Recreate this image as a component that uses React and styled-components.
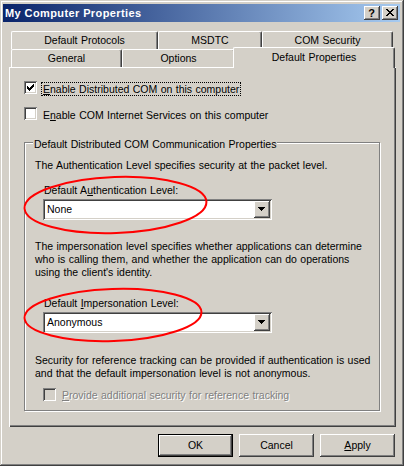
import React from "react";
import styled, { createGlobalStyle, css } from "styled-components";

const FACE = "#D4D0C8";
const SHADOW = "#808080";
const DARK = "#404040";

const GlobalStyle = createGlobalStyle`
  html, body { margin: 0; padding: 0; background: ${FACE}; }
  body { font-family: "Liberation Sans", Arial, sans-serif; font-size: 10.5px; word-spacing: 0.5px; color: #000; }
  * { box-sizing: border-box; }
`;

const Window = styled.div`
  position: relative;
  width: 404px;
  height: 466px;
  background: ${FACE};
  padding: 4px 4px 4px 3px;
  display: flex;
  flex-direction: column;
  box-shadow: inset -1px -1px ${DARK}, inset 1px 1px ${FACE}, inset -2px -2px ${SHADOW}, inset 2px 2px #fff;
`;

const TitleBar = styled.div`
  height: 18px;
  display: flex;
  align-items: center;
  padding: 0 2px 0 2px;
  background: linear-gradient(to right, #0a246a, #a6caf0);
  color: #fff;
`;

const TitleText = styled.span`
  font-weight: bold;
  font-size: 11px;
  line-height: 13px;
  letter-spacing: 0.4px;
  word-spacing: 0;
`;

const TitleButtons = styled.div`
  margin-left: auto;
  display: flex;
  gap: 2px;
`;

const raised = css`
  background: ${FACE};
  box-shadow: inset -1px -1px ${DARK}, inset 1px 1px #fff, inset -2px -2px ${SHADOW}, inset 2px 2px ${FACE};
`;

const CaptionButton = styled.div`
  ${raised};
  width: 16px;
  height: 14px;
  display: flex;
  align-items: center;
  justify-content: center;
  color: #000;
  font-weight: bold;
  font-size: 11px;
  line-height: 12px;
  padding: 0 1px 1px 0;
`;

const Body = styled.div`
  display: flex;
  flex-direction: column;
  padding: 9px 0 0 6px;
`;

const TabStrip = styled.div`
  display: flex;
  flex-direction: column;
  padding-left: 2px;
  position: relative;
  z-index: 2;
`;

const TabRow = styled.div`
  display: flex;
  height: 18px;
  align-items: flex-start;
`;

const Tab = styled.div`
  width: ${(p) => p.$w}px;
  height: 18px;
  background: ${FACE};
  border-top: 1px solid #fff;
  border-left: 1px solid #fff;
  border-right: 1px solid ${DARK};
  border-radius: 2px 2px 0 0;
  box-shadow: inset -1px 0 ${SHADOW};
  text-align: center;
  line-height: 13px;
  padding-top: 2px;
  ${(p) =>
    p.$active &&
    css`
      height: 21px;
      margin: -2px -2px 0 -2px;
      width: ${p.$w + 4}px;
      padding-top: 3px;
      position: relative;
      z-index: 3;
    `}
`;

const Panel = styled.div`
  width: 387px;
  height: 360px;
  background: ${FACE};
  box-shadow: inset 1px 1px #fff, inset -1px -1px ${DARK}, inset -2px -2px ${SHADOW};
  padding: 14px 15px 0 15px;
  display: flex;
  flex-direction: column;
`;

const CheckRow = styled.div`
  display: flex;
  align-items: flex-start;
  gap: ${(p) => p.$gap ?? 4}px;
  margin-top: ${(p) => p.$mt ?? 0}px;
  margin-left: ${(p) => p.$ml ?? 0}px;
`;

const Box = styled.div`
  width: 13px;
  height: 13px;
  flex: none;
  background: ${(p) => (p.$disabled ? FACE : "#fff")};
  box-shadow: inset 1px 1px ${SHADOW}, inset -1px -1px #fff, inset 2px 2px ${DARK}, inset -2px -2px ${FACE};
  display: flex;
  padding: 3px;
`;

const CheckLabel = styled.span`
  line-height: 12px;
  margin-top: ${(p) => p.$mt ?? 1}px;
  padding: 0 1px;
  border: 1px ${(p) => (p.$focus ? "dotted #000" : "solid transparent")};
  white-space: nowrap;
  ${(p) =>
    p.$disabled &&
    css`
      color: ${SHADOW};
      text-shadow: 1px 1px #fff;
    `}
`;

const U = styled.span`
  text-decoration: underline;
  text-underline-offset: 1px;
`;

const Group = styled.div`
  width: 356px;
  height: 269px;
  margin-top: ${(p) => p.$mt}px;
  border: 1px solid ${SHADOW};
  box-shadow: inset 1px 1px #fff, 1px 1px #fff;
  padding: 0 10px 0 10px;
  display: flex;
  flex-direction: column;
`;

const Legend = styled.span`
  align-self: flex-start;
  margin: -5px 0 0 -2px;
  padding: 0 1px;
  background: ${FACE};
  line-height: 13px;
  white-space: nowrap;
`;

const Text = styled.div`
  line-height: 13px;
  margin-top: ${(p) => p.$mt ?? 0}px;
  margin-left: ${(p) => p.$ml ?? 0}px;
  white-space: nowrap;
`;

const Combo = styled.div`
  width: 229px;
  height: 21px;
  margin-top: ${(p) => p.$mt ?? 2}px;
  margin-left: 8px;
  background: #fff;
  box-shadow: inset 1px 1px ${SHADOW}, inset -1px -1px #fff, inset 2px 2px ${DARK}, inset -2px -2px ${FACE};
  display: flex;
  align-items: center;
  padding: 2px 2px 2px 4px;
`;

const ComboValue = styled.span`
  flex: 1;
  line-height: 13px;
`;

const DropButton = styled.div`
  ${raised};
  width: 16px;
  height: 17px;
  display: flex;
  align-items: center;
  justify-content: center;
  padding: 0 1px 1px 0;
`;

const ButtonRow = styled.div`
  display: flex;
  justify-content: flex-end;
  gap: 6px;
  width: 386px;
  margin-top: 7px;
`;

const Button = styled.div`
  ${raised};
  width: 75px;
  height: 23px;
  display: flex;
  align-items: center;
  justify-content: center;
  line-height: 13px;
  padding-bottom: 1px;
  ${(p) =>
    p.$default &&
    css`
      box-shadow: inset 0 0 0 1px #000, inset -2px -2px ${DARK}, inset 2px 2px #fff, inset -3px -3px ${SHADOW};
    `}
`;

const Overlay = styled.svg`
  position: absolute;
  left: 0;
  top: 0;
  pointer-events: none;
  z-index: 10;
`;

const Pixels = ({ rows, w, h }) => (
  <svg width={w} height={h} viewBox={`0 0 ${w} ${h}`} shapeRendering="crispEdges" style={{ display: "block" }}>
    {rows.map(([y, x0, x1], i) => (
      <rect key={i} x={x0} y={y} width={x1 - x0 + 1} height={1} fill="#000" />
    ))}
  </svg>
);

const CHECK = [
  [0, 6, 6],
  [1, 5, 6],
  [2, 0, 0],
  [2, 4, 6],
  [3, 0, 1],
  [3, 3, 5],
  [4, 0, 4],
  [5, 1, 3],
  [6, 2, 2],
];

const ARROW = [
  [0, 0, 6],
  [1, 1, 5],
  [2, 2, 4],
  [3, 3, 3],
];

const CLOSE = [
  [0, 0, 1], [0, 6, 7],
  [1, 1, 2], [1, 5, 6],
  [2, 2, 5],
  [3, 3, 4],
  [4, 2, 5],
  [5, 1, 2], [5, 5, 6],
  [6, 0, 1], [6, 6, 7],
];

const Checkbox = ({ checked, disabled }) => (
  <Box $disabled={disabled}>{checked && <Pixels rows={CHECK} w={7} h={7} />}</Box>
);

const ComboBox = ({ value, mt }) => (
  <Combo $mt={mt}>
    <ComboValue>{value}</ComboValue>
    <DropButton>
      <Pixels rows={ARROW} w={7} h={4} />
    </DropButton>
  </Combo>
);

export default function App() {
  return (
    <>
      <GlobalStyle />
      <Window>
        <TitleBar>
          <TitleText>My Computer Properties</TitleText>
          <TitleButtons>
            <CaptionButton>?</CaptionButton>
            <CaptionButton>
              <Pixels rows={CLOSE} w={8} h={7} />
            </CaptionButton>
          </TitleButtons>
        </TitleBar>
        <Body>
          <TabStrip>
            <TabRow>
              <Tab $w={147}>Default Protocols</Tab>
              <Tab $w={104}>MSDTC</Tab>
              <Tab $w={131}>COM Security</Tab>
            </TabRow>
            <TabRow>
              <Tab $w={111}>General</Tab>
              <Tab $w={113}>Options</Tab>
              <Tab $w={158} $active>
                Default Properties
              </Tab>
            </TabRow>
          </TabStrip>
          <Panel>
            <CheckRow>
              <Checkbox checked />
              <CheckLabel $focus>
                <U>E</U>nable Distributed COM on this computer
              </CheckLabel>
            </CheckRow>
            <CheckRow $mt={11}>
              <Checkbox />
              <CheckLabel>
                E<U>n</U>able COM Internet Services on this computer
              </CheckLabel>
            </CheckRow>
            <Group $mt={20}>
              <Legend>Default Distributed COM Communication Properties</Legend>
              <Text $mt={8}>The Authentication Level specifies security at the packet level.</Text>
              <Text $mt={12} $ml={9}>
                Default A<U>u</U>thentication Level:
              </Text>
              <ComboBox value="None" />
              <Text $mt={20}>
                The impersonation level specifies whether applications can determine
                <br />
                who is calling them, and whether the application can do operations
                <br />
                using the client's identity.
              </Text>
              <Text $mt={18} $ml={9}>
                Default <U>I</U>mpersonation Level:
              </Text>
              <ComboBox value="Anonymous" />
              <Text $mt={21}>
                Security for reference tracking can be provided if authentication is used
                <br />
                and that the default impersonation level is not anonymous.
              </Text>
              <CheckRow $mt={8} $ml={8} $gap={4}>
                <Checkbox disabled />
                <CheckLabel $disabled $mt={0}>
                  <U>P</U>rovide additional security for reference tracking
                </CheckLabel>
              </CheckRow>
            </Group>
          </Panel>
          <ButtonRow>
            <Button $default>OK</Button>
            <Button>Cancel</Button>
            <Button>
              <U>A</U>pply
            </Button>
          </ButtonRow>
        </Body>
        <Overlay width="404" height="466" viewBox="0 0 404 466">
          <ellipse cx="115.5" cy="205" rx="91" ry="28" fill="none" stroke="#ff0000" strokeWidth="2" transform="rotate(-2 115.5 205)" />
          <ellipse cx="113" cy="315" rx="88.5" ry="26" fill="none" stroke="#ff0000" strokeWidth="2" transform="rotate(-2 113 315)" />
        </Overlay>
      </Window>
    </>
  );
}
